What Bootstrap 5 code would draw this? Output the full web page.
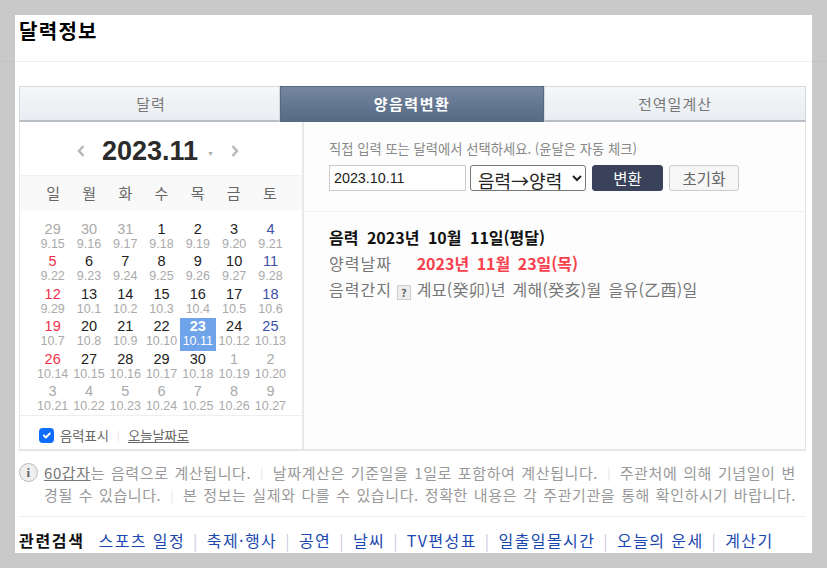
<!DOCTYPE html>
<html lang="ko">
<head>
<meta charset="UTF-8">
<title>달력정보</title>
<link href="https://cdn.jsdelivr.net/npm/bootstrap@5.3.2/dist/css/bootstrap.min.css" rel="stylesheet">
<style>
html, body { height: 568px; overflow: hidden; }
body {
    font-family: "Noto Sans CJK KR", "Liberation Sans", sans-serif;
    background: linear-gradient(#c9c9c9 61px, #c3c3c3 61px, #c3c3c3 62px, #c9c9c9 62px);
    padding: 15px;
}
.sheet { width: 797px; height: 538px; background: #fff; overflow: hidden; }
.title-bar { height: 47px; border-bottom: 1px solid #eee; padding: 2px 0 0 4px; }
.title-bar h1 { font-size: 20px; letter-spacing: 1.3px; font-weight: 700; line-height: 28px; margin: 0; color: #000; }
.info-box { margin: 24px 0 0 4px; width: 787px; }
.tab-row { height: 36px; }
.tab-item {
    flex: 0 0 261px; text-align: center; font-size: 15px; letter-spacing: 1px; line-height: 33px; color: #777;
    background: linear-gradient(#f5f7f9, #e9edf1);
    border: 1px solid #d5d9dd; border-bottom: 2px solid #b9bec4; text-decoration: none;
}
.tab-item.first { padding-left: 3px; }
.tab-item.on {
    flex: 0 0 264px; color: #fff; font-weight: 700; letter-spacing: 1.5px; border: 1px solid #566a83;
    background: linear-gradient(#7486a0, #566a83);
}
.tab-item.last { flex: 0 0 262px; }
.tab-body { height: 329px; border: solid #e5e5e5; border-width: 0 1px 2px 1px; }
.cal-col { width: 284px; flex: none; border-right: 2px solid #e8e8e8; }
.cal-head { height: 53px; gap: 17px; padding: 5px 6px 0 0; }
.cal-year { font-family: "Liberation Sans", sans-serif; font-size: 27px; font-weight: 700; color: #2b2b2b; line-height: 1; }
.cal-caret { color: #aaa; font-size: 7px; margin-left: 9px; vertical-align: 4px; }
.week-row { height: 35px; background: #f9f9f9; border-top: 1px solid #f1f1f1; padding: 1px 14px 0 15px; font-size: 15px; color: #666; }
.day-grid { display: grid; grid-template-columns: repeat(7, 36.3px); grid-auto-rows: 32.4px; padding: 11px 14px 0 14.500px; height: 206px; border-bottom: 1px solid #eee; }
.week-row span { width: 36.3px; text-align: center; }
.day-cell { text-align: center; color: #222; font-size: 14.5px; line-height: 16px; font-family: "Liberation Sans", sans-serif; }
.day-cell small { display: block; font-size: 12.5px; line-height: 14px; color: #aaa; }
.day-cell.off { color: #aaa; }
.day-cell.sun { color: #f0304a; }
.day-cell.sat { color: #3d50a8; }
.day-cell.pick { background: #6fa3ea; color: #fff; font-weight: 700; }
.day-cell.pick small { color: #fff; font-weight: 400; }
.cal-foot { padding: 6px 0 0 19px; height: 33px; gap: 6px; font-size: 13.300px; color: #666; }
.cal-foot input { width: 15px; height: 15px; margin: 0; border-radius: 3px; }
.cal-foot a { color: #666; }
.foot-sep { color: #f0dfd8; font-size: 11px; margin: 0 2px; }
.convert-col { background: #fdfdfd; }
.form-area { height: 90px; border-bottom: 1px solid #f0f0f0; padding: 20px 0 0 25px; }
.form-hint { font-size: 13.300px; color: #888; line-height: 14px; margin-bottom: 9px; white-space: nowrap; }
.date-input { width: 137px; height: 26px; border: 1px solid #ccc; padding: 0 4px; font-size: 14.300px; font-family: "Liberation Sans", sans-serif; color: #222; }
.mode-select { width: 116px; height: 26px; border: 1px solid #767676; border-radius: 3px; background: #fff; font-size: 18px; color: #222; padding: 0 0 0 3px; margin-left: 4px; }
.btn-run { width: 71px; height: 26px; padding: 0; margin-left: 6px; font-size: 15.500px; line-height: 24px; background: #39425a; color: #fff; border: 1px solid #39425a; border-radius: 3px; }
.btn-clear { width: 70px; height: 26px; padding: 0; margin-left: 6px; font-size: 15.500px; line-height: 24px; background: #f6f6f6; color: #666; border: 1px solid #ccc; border-radius: 3px; }
.result-area { padding: 12px 0 0 25px; font-size: 16px; line-height: 26px; color: #777; letter-spacing: 0.3px; word-spacing: 2px; white-space: nowrap; }
.result-area .lbl { letter-spacing: 1px; }
.result-main { font-weight: 700; color: #111; letter-spacing: 0; word-spacing: 4px; }
.result-red { font-weight: 700; color: #f8404c; letter-spacing: 0; margin-left: 18px; word-spacing: 3px; }
.help-mark { display: inline-block; width: 14px; height: 15px; line-height: 13px; font-size: 11px; font-weight: 700; text-align: center; border: 1px solid #ccc; background: #eee; color: #666; margin: 0 -1px 0 5px; vertical-align: -1px; }
.note-box { position: relative; margin: 11px 0 0 4px; padding: 0 0 0 25px; width: 790px; font-size: 15px; letter-spacing: 0.6px; word-spacing: 1.100px; line-height: 22px; color: #999; height: 45px; white-space: nowrap; }
.note-box a { color: #777; }
.note-icon { position: absolute; left: 0; top: 1px; width: 19px; height: 19px; border-radius: 50%; border: 1px solid #bbb; background: #eee; color: #666; font: 700 13px/17px "Liberation Serif", serif; text-align: center; }
.note-sep { color: #e2e2e2; font-size: 11px; margin: 0 9px; vertical-align: 1px; }
.related { margin: 9px 0 0 4px; width: 787px; border-top: 1px solid #eee; padding-top: 13px; font-size: 16px; letter-spacing: 1.4px; line-height: 20px; white-space: nowrap; }
.related b { color: #111; letter-spacing: 1.700px; margin-right: 8px; }
.related a { color: #1a47b0; text-decoration: none; }
.related i { color: #ccd; font-style: normal; margin: 0 8px; }
</style>
</head>
<body>
<div class="sheet">
    <div class="title-bar"><h1>달력정보</h1></div>

    <div class="info-box">
        <div class="tab-row d-flex">
            <a class="tab-item first" href="#">달력</a>
            <a class="tab-item on" href="#">양음력변환</a>
            <a class="tab-item last" href="#">전역일계산</a>
        </div>
        <div class="tab-body d-flex">
            <div class="cal-col">
                <div class="cal-head d-flex align-items-center justify-content-center">
                    <svg width="8" height="12" viewBox="0 0 8 12"><path d="M6.500 1 2 6l4.500 5" fill="none" stroke="#b8b8b8" stroke-width="2.500"/></svg>
                    <div class="cal-year">2023.11<span class="cal-caret">▼</span></div>
                    <svg width="8" height="12" viewBox="0 0 8 12"><path d="M1.500 1 6 6l-4.500 5" fill="none" stroke="#b8b8b8" stroke-width="2.500"/></svg>
                </div>
                <div class="week-row d-flex align-items-center">
                    <span>일</span><span>월</span><span>화</span><span>수</span><span>목</span><span>금</span><span>토</span>
                </div>
                <div class="day-grid" id="days"></div>
                <div class="cal-foot d-flex align-items-center">
                    <input type="checkbox" class="form-check-input" checked>
                    <span>음력표시</span><span class="foot-sep">|</span><a href="#">오늘날짜로</a>
                </div>
            </div>
            <div class="convert-col flex-grow-1">
                <div class="form-area">
                    <div class="form-hint">직접 입력 또는 달력에서 선택하세요. (윤달은 자동 체크)</div>
                    <div class="d-flex align-items-center">
                        <input class="date-input" type="text" value="2023.10.11">
                        <select class="mode-select"><option>음력→양력</option><option>양력→음력</option></select>
                        <button class="btn btn-run" type="button">변환</button>
                        <button class="btn btn-clear" type="button">초기화</button>
                    </div>
                </div>
                <div class="result-area">
                    <div class="result-main">음력 2023년 10월 11일(평달)</div>
                    <div><span class="lbl">양력날짜</span> <span class="result-red">2023년 11월 23일(목)</span></div>
                    <div><span class="lbl">음력간지</span><span class="help-mark">?</span> 계묘(癸卯)년 계해(癸亥)월 을유(乙酉)일</div>
                </div>
            </div>
        </div>
    </div>

    <div class="note-box">
        <span class="note-icon">i</span>
        <a href="#">60갑자</a>는 음력으로 계산됩니다.<span class="note-sep">|</span>날짜계산은 기준일을 1일로 포함하여 계산됩니다.<span class="note-sep">|</span>주관처에 의해 기념일이 변<br>경될 수 있습니다.<span class="note-sep">|</span>본 정보는 실제와 다를 수 있습니다. 정확한 내용은 각 주관기관을 통해 확인하시기 바랍니다.
    </div>

    <div class="related">
        <b>관련검색</b>
        <a href="#">스포츠 일정</a><i>|</i><a href="#">축제·행사</a><i>|</i><a href="#">공연</a><i>|</i><a href="#">날씨</a><i>|</i><a href="#">TV편성표</a><i>|</i><a href="#">일출일몰시간</a><i>|</i><a href="#">오늘의 운세</a><i>|</i><a href="#">계산기</a>
    </div>
</div>

<script>
const cells = [
    [29,'9.15'],[30,'9.16'],[31,'9.17'],[1,'9.18'],[2,'9.19'],[3,'9.20'],[4,'9.21'],
    [5,'9.22'],[6,'9.23'],[7,'9.24'],[8,'9.25'],[9,'9.26'],[10,'9.27'],[11,'9.28'],
    [12,'9.29'],[13,'10.1'],[14,'10.2'],[15,'10.3'],[16,'10.4'],[17,'10.5'],[18,'10.6'],
    [19,'10.7'],[20,'10.8'],[21,'10.9'],[22,'10.10'],[23,'10.11'],[24,'10.12'],[25,'10.13'],
    [26,'10.14'],[27,'10.15'],[28,'10.16'],[29,'10.17'],[30,'10.18'],[1,'10.19'],[2,'10.20'],
    [3,'10.21'],[4,'10.22'],[5,'10.23'],[6,'10.24'],[7,'10.25'],[8,'10.26'],[9,'10.27']
];
document.getElementById('days').innerHTML = cells.map((c, i) => {
    let cls = 'day-cell';
    if (i < 3 || i > 32) cls += ' off';
    else if (i % 7 === 0) cls += ' sun';
    else if (i % 7 === 6) cls += ' sat';
    if (i === 25) cls += ' pick';
    return `<div class="${cls}">${c[0]}<small>${c[1]}</small></div>`;
}).join('');
</script>
<script src="https://cdn.jsdelivr.net/npm/bootstrap@5.3.2/dist/js/bootstrap.bundle.min.js"></script>
</body>
</html>
